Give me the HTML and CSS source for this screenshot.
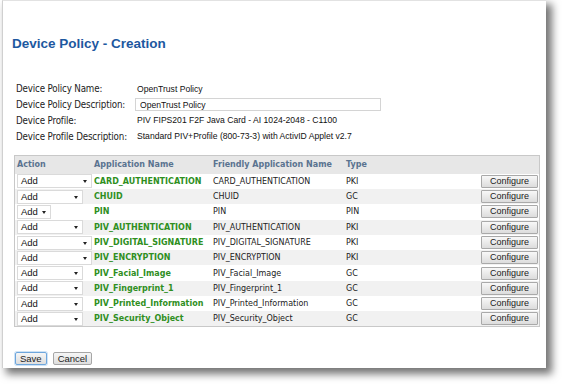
FILE: index.html
```html
<!DOCTYPE html>
<html>
  <head>
    <title>Device Policy - Creation</title>
    <link rel="stylesheet" href="styles.css">
  </head>
  <body>
    <div class="window">
      <h1 class="title">Device Policy - Creation</h1>

      <div class="props">
        <div class="prop-label">Device Policy Name:</div>
        <div class="prop-value">OpenTrust Policy</div>
        <div class="prop-label">Device Policy Description:</div>
        <div class="prop-value"><input type="text" class="prop-input" value="OpenTrust Policy"></div>
        <div class="prop-label">Device Profile:</div>
        <div class="prop-value">PIV FIPS201 F2F Java Card - AI 1024-2048 - C1100</div>
        <div class="prop-label">Device Profile Description:</div>
        <div class="prop-value">Standard PIV+Profile (800-73-3) with ActivID Applet v2.7</div>
      </div>

      <table class="apps">
        <tr>
          <th class="col-action">Action</th>
          <th class="col-app">Application Name</th>
          <th class="col-friendly">Friendly Application Name</th>
          <th class="col-type">Type</th>
          <th class="col-conf"></th>
        </tr>
        <tr>
          <td><div class="sel wide">Add<span class="arrow"></span></div></td>
          <td class="app">CARD_AUTHENTICATION</td>
          <td>CARD_AUTHENTICATION</td>
          <td>PKI</td>
          <td><button class="conf">Configure</button></td>
        </tr>
        <tr>
          <td><div class="sel">Add<span class="arrow"></span></div></td>
          <td class="app">CHUID</td>
          <td>CHUID</td>
          <td>GC</td>
          <td><button class="conf">Configure</button></td>
        </tr>
        <tr>
          <td><div class="sel narrow">Add<span class="arrow"></span></div></td>
          <td class="app">PIN</td>
          <td>PIN</td>
          <td>PIN</td>
          <td><button class="conf">Configure</button></td>
        </tr>
        <tr>
          <td><div class="sel">Add<span class="arrow"></span></div></td>
          <td class="app">PIV_AUTHENTICATION</td>
          <td>PIV_AUTHENTICATION</td>
          <td>PKI</td>
          <td><button class="conf">Configure</button></td>
        </tr>
        <tr>
          <td><div class="sel wide">Add<span class="arrow"></span></div></td>
          <td class="app">PIV_DIGITAL_SIGNATURE</td>
          <td>PIV_DIGITAL_SIGNATURE</td>
          <td>PKI</td>
          <td><button class="conf">Configure</button></td>
        </tr>
        <tr>
          <td><div class="sel wide">Add<span class="arrow"></span></div></td>
          <td class="app">PIV_ENCRYPTION</td>
          <td>PIV_ENCRYPTION</td>
          <td>PKI</td>
          <td><button class="conf">Configure</button></td>
        </tr>
        <tr>
          <td><div class="sel">Add<span class="arrow"></span></div></td>
          <td class="app">PIV_Facial_Image</td>
          <td>PIV_Facial_Image</td>
          <td>GC</td>
          <td><button class="conf">Configure</button></td>
        </tr>
        <tr>
          <td><div class="sel">Add<span class="arrow"></span></div></td>
          <td class="app">PIV_Fingerprint_1</td>
          <td>PIV_Fingerprint_1</td>
          <td>GC</td>
          <td><button class="conf">Configure</button></td>
        </tr>
        <tr>
          <td><div class="sel">Add<span class="arrow"></span></div></td>
          <td class="app">PIV_Printed_Information</td>
          <td>PIV_Printed_Information</td>
          <td>GC</td>
          <td><button class="conf">Configure</button></td>
        </tr>
        <tr>
          <td><div class="sel">Add<span class="arrow"></span></div></td>
          <td class="app">PIV_Security_Object</td>
          <td>PIV_Security_Object</td>
          <td>GC</td>
          <td><button class="conf">Configure</button></td>
        </tr>
      </table>

      <div class="actions">
        <button class="btn save">Save</button>
        <button class="btn">Cancel</button>
      </div>
    </div>
  </body>
</html>
```

FILE: styles.css
```css
* {
    box-sizing: border-box;
}

html, body {
    height: 100%;
}

body {
    margin: 0;
    background: white;
    font-family: "Liberation Sans", Arial, sans-serif;
}

.window {
    margin-left: 2px;
    width: 544px;
    height: 368px;
    padding: 0 0 0 9px;
    background: white;
    border-top: 1px solid #e2e2e2;
    border-left: 1px solid #d0d0d0;
    box-shadow: 5px 5px 8px 1px rgba(0, 0, 0, .55);
}

.title {
    margin: 35px 0 0 0;
    font-size: 13.5px;
    line-height: 16px;
    font-weight: bold;
    color: #1d58a0;
}

.props {
    display: grid;
    grid-template-columns: 119px auto;
    grid-auto-rows: 15.8px;
    margin: 29px 0 0 4px;
    align-items: center;
}

.prop-label {
    font: 9.7px "DejaVu Sans Condensed", "DejaVu Sans", sans-serif;
    color: #222;
    white-space: nowrap;
    letter-spacing: -.15px;
}

.prop-value {
    font-size: 8.6px;
    color: #111;
    padding-left: 2px;
    white-space: nowrap;
}

.prop-input {
    width: 246px;
    height: 13px;
    margin: 0 0 0 -2px;
    padding: 0 4px;
    border: 1px solid #d4d4d4;
    font: 8.6px "Liberation Sans", Arial, sans-serif;
    color: #111;
}

.apps {
    margin: 11px 0 0 2px;
    width: 526px;
    border-collapse: collapse;
    border: 1px solid #c8c8c8;
    font: 8px "DejaVu Sans", Verdana, sans-serif;
    color: #222;
}

.apps th {
    height: 18px;
    padding: 0 0 0 2px;
    background: #e7e7e7;
    color: #5a7390;
    font-weight: bold;
    text-align: left;
    white-space: nowrap;
}

.apps td {
    height: 15.3px;
    padding: 0 0 0 2px;
    white-space: nowrap;
}

.apps tr:nth-child(odd) td {
    background: #f1f1f1;
}

.col-action {
    width: 77px;
}

.col-app {
    width: 119px;
}

.col-friendly {
    width: 133px;
}

.col-type {
    width: 135px;
}

.apps td.app {
    color: #2f8f1e;
    font-weight: bold;
}

.sel {
    position: relative;
    width: 66px;
    height: 14px;
    padding-left: 3px;
    background: white;
    border: 1px solid #dadada;
    font: 9.5px/12px "Liberation Sans", Arial, sans-serif;
    color: #111;
}

.sel.wide {
    width: 75px;
}

.sel.narrow {
    width: 34px;
}

.arrow {
    position: absolute;
    right: 4px;
    top: 5px;
    border-left: 2.5px solid transparent;
    border-right: 2.5px solid transparent;
    border-top: 3px solid #222;
}

.conf {
    display: block;
    width: 57px;
    height: 13px;
    margin: 0 0 0 0;
    padding: 0;
    background: linear-gradient(#f8f8f8, #dcdcdc);
    border: 1px solid #a9a9a9;
    border-radius: 1px;
    font: 9px/11px "Liberation Sans", Arial, sans-serif;
    color: #222;
}

.actions {
    display: flex;
    gap: 6px;
    margin: 25px 0 0 3px;
}

.btn {
    height: 13px;
    padding: 0 4px;
    background: linear-gradient(#f6f6f6, #dedede);
    border: 1px solid #a6a6a6;
    border-radius: 2px;
    font: 9.5px/11px "Liberation Sans", Arial, sans-serif;
    color: #222;
}

.btn.save {
    border-color: #6ea6dc;
    box-shadow: 0 0 0 1px #cfe3f6;
}
```
